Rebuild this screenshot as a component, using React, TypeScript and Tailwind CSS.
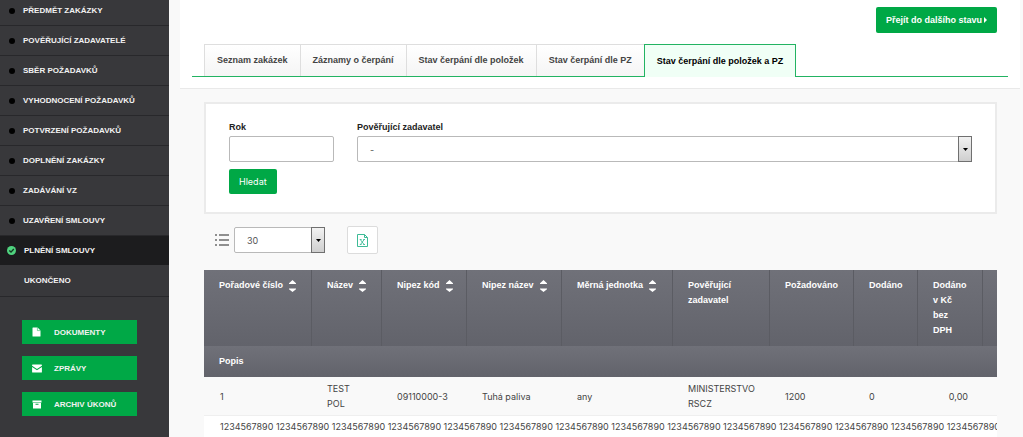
import React from "react";

const steps = [
  "Předmět zakázky",
  "Pověřující zadavatelé",
  "Sběr požadavků",
  "Vyhodnocení požadavků",
  "Potvrzení požadavků",
  "Doplnění zakázky",
  "Zadávání VZ",
  "Uzavření smlouvy",
];

const tabs = [
  "Seznam zakázek",
  "Záznamy o čerpání",
  "Stav čerpání dle položek",
  "Stav čerpání dle PZ",
];

const columns = [
  { label: "Pořadové číslo", sortable: true, width: "w-[108px]" },
  { label: "Název", sortable: true, width: "w-[70px]" },
  { label: "Nipez kód", sortable: true, width: "w-[85px]" },
  { label: "Nipez název", sortable: true, width: "w-[95px]" },
  { label: "Měrná jednotka", sortable: true, width: "w-[111px]" },
  { label: "Pověřující zadavatel", sortable: false, width: "w-[97px]" },
  { label: "Požadováno", sortable: false, width: "w-[84px]" },
  { label: "Dodáno", sortable: false, width: "w-[64px]" },
  { label: "Dodáno v Kč bez DPH", sortable: false, width: "w-[65px]" },
  { label: "", sortable: false, width: "w-[65px]" },
];

const description = Array(18).fill("1234567890").join(" ");

function SortIcon() {
  return (
    <svg width="7" height="12" viewBox="0 0 7 12" className="shrink-0" aria-hidden="true">
      <path d="M3.5 0 7 3.2V4H0V3.2Z M0 8.4H7V9.2L3.5 12 0 9.2Z" fill="#fff" />
    </svg>
  );
}

function DocumentIcon() {
  return (
    <svg width="9" height="10" viewBox="0 0 9 10" fill="#fff" aria-hidden="true">
      <path d="M1 .5H5.6L8.5 3.4V9a.5.5 0 0 1-.5.5H1A.5.5 0 0 1 .5 9V1A.5.5 0 0 1 1 .5Z" />
      <path d="M5.4.5V3.6H8.5" fill="none" stroke="#00a846" strokeWidth=".5" />
    </svg>
  );
}

function MailIcon() {
  return (
    <svg width="10" height="9" viewBox="0 0 10 9" fill="#fff" aria-hidden="true">
      <path d="M.6.5H9.4a.5.5 0 0 1 .5.5V1.8L5 5 .1 1.8V1A.5.5 0 0 1 .6.5Z M.1 3 5 6.2 9.9 3V8a.5.5 0 0 1-.5.5H.6A.5.5 0 0 1 .1 8Z" />
    </svg>
  );
}

function ArchiveIcon() {
  return (
    <svg width="10" height="9" viewBox="0 0 10 9" fill="#fff" aria-hidden="true">
      <path d="M.5.5H9.5V2.4H.5Z M1 3H9V8.5H1Z M3.5 3.8V4.7H6.5V3.8Z" fillRule="evenodd" />
    </svg>
  );
}

function SelectBox({
  id,
  label,
  value,
  className,
}: {
  id: string;
  label?: string;
  value: string;
  className?: string;
}) {
  return (
    <div className="relative">
      <select
        id={id}
        aria-label={label}
        className={`block h-[26px] appearance-none rounded-[2px] border border-[#b9b9b9] bg-white pl-3 pr-5 font-[Inter,sans-serif] text-[9px] text-[#555] ${className ?? ""}`}
      >
        <option>{value}</option>
      </select>
      <span className="pointer-events-none absolute inset-y-0 right-0 flex w-[14px] items-center justify-center border border-[#707070] bg-linear-to-b from-[#f2f2f2] to-[#cfcfcf]">
        <svg width="5" height="3" viewBox="0 0 5 3" aria-hidden="true">
          <path d="M0 0H5L2.5 3Z" fill="#000" />
        </svg>
      </span>
    </div>
  );
}

const sideButtons = [
  { label: "Dokumenty", icon: <DocumentIcon /> },
  { label: "Zprávy", icon: <MailIcon /> },
  { label: "Archiv úkonů", icon: <ArchiveIcon /> },
];

export default function App() {
  return (
    <div className="flex h-screen overflow-hidden bg-[#f9f9f9] font-['Liberation_Sans',Arial,sans-serif] text-[9px] leading-[15px] text-[#444]">
      <aside className="w-[169px] shrink-0 bg-[#38383b] text-[8px] font-bold uppercase text-[#f2f2f2]">
        <nav>
          <ul className="-mt-1">
            {steps.map((s) => (
              <li key={s} className="h-[30px] border-b border-[#28282b]">
                <a href="#" className="flex h-full items-center gap-2 pl-[9px]">
                  <span className="size-[6px] rounded-full bg-black" />
                  {s}
                </a>
              </li>
            ))}
            <li className="h-[29px] bg-[#1c1c1e]">
              <a href="#" aria-current="step" className="flex h-full items-center gap-2 pl-[7px]">
                <svg width="9" height="9" viewBox="0 0 9 9" aria-hidden="true">
                  <circle cx="4.5" cy="4.5" r="4.5" fill="#4fd37f" />
                  <path d="M2.3 4.5 4 6.1 6.8 3" fill="none" stroke="#143a22" strokeWidth="1.4" />
                </svg>
                Plnění smlouvy
              </a>
            </li>
            <li className="h-8 border-b border-[#28282b]">
              <a href="#" className="flex h-full items-center pl-6">Ukončeno</a>
            </li>
          </ul>
        </nav>
        <div className="mt-[23px] flex flex-col gap-3 pl-[22px] pr-8">
          {sideButtons.map((b) => (
            <button key={b.label} type="button" className="flex h-6 items-center bg-[#00a846] pl-[10px] uppercase">
              <span className="flex w-[22px]">{b.icon}</span>
              {b.label}
            </button>
          ))}
        </div>
      </aside>

      <main className="min-w-0 flex-1 pl-[11px] pr-[3px]">
        <header className="border-b border-[#e9e9e9] bg-white pb-[11px] pl-3 pr-3 pt-[7px]">
          <div className="flex justify-end pr-[11px]">
            <button type="button" className="flex h-[26px] items-center gap-[2px] rounded-[2px] bg-[#00a846] px-[10px] font-bold text-white">
              Přejít do dalšího stavu
              <svg width="3" height="6" viewBox="0 0 3 6" aria-hidden="true">
                <path d="M0 0 3 3 0 6Z" fill="#fff" />
              </svg>
            </button>
          </div>
          <nav className="mt-[11px] flex border-b border-[#22b362] pl-3 font-bold">
            {tabs.map((t) => (
              <a
                key={t}
                href="#"
                className="flex h-8 items-center border-l border-t border-[#dedede] bg-linear-to-b from-white to-[#f5f5f5] px-3"
              >
                {t}
              </a>
            ))}
            <a
              href="#"
              aria-current="page"
              className="-mb-px flex h-[33px] items-center border border-b-0 border-[#22b362] bg-[#f0fff6] px-3 text-black"
            >
              Stav čerpání dle položek a PZ
            </a>
          </nav>
        </header>

        <section className="pl-6 pr-[23px]">
          <form className="mt-[13px] border-2 border-[#ebebeb] bg-white px-[23px] pb-[18px] pt-4">
            <div className="flex gap-[23px]">
              <div>
                <label htmlFor="rok" className="mb-px block font-bold text-[#222]">Rok</label>
                <input id="rok" type="text" className="block h-[26px] w-[105px] rounded-[2px] border border-[#b9b9b9] bg-white px-2" />
              </div>
              <div className="flex-1">
                <label htmlFor="zadavatel" className="mb-px block font-bold text-[#222]">Pověřující zadavatel</label>
                <SelectBox id="zadavatel" value="-" className="w-full" />
              </div>
            </div>
            <button type="button" className="mt-[7px] block h-[25px] rounded-[2px] bg-[#00a846] px-[10px] font-[Inter,sans-serif] text-white">
              Hledat
            </button>
          </form>

          <div className="mt-3 flex items-center pl-[11px]">
            <svg width="14" height="12" viewBox="0 0 14 12" fill="#8f8f8f" className="mr-[5px]" aria-hidden="true">
              <path d="M0 0h2v2H0z M4 0h10v2H4z M0 5h2v2H0z M4 5h10v2H4z M0 10h2v2H0z M4 10h10v2H4z" />
            </svg>
            <SelectBox id="pocet" label="Počet záznamů" value="30" className="w-[91px]" />
            <button type="button" aria-label="Export" className="ml-[22px] flex h-7 w-[31px] items-center justify-center rounded-[2px] border border-[#dcdcdc] bg-white">
              <svg width="11" height="13" viewBox="0 0 11 13" fill="none" stroke="#3dbb96" aria-hidden="true">
                <path d="M.5.5H7.5L10.5 3.5V12.5H.5Z M7.5.5V3.5H10.5" />
                <path d="M3.3 5.5 7 10.5 M7.2 5.5 3.5 10.5 M2.8 5.5H4.6 M6.2 5.5H8 M2.8 10.5H4.6 M6.2 10.5H8" strokeWidth=".9" />
              </svg>
            </button>
          </div>

          <div className="mt-4 overflow-hidden">
            <table className="w-[844px] table-fixed border-collapse text-left font-[Inter,sans-serif]">
              <thead className="font-['Liberation_Sans',Arial,sans-serif] text-white">
                <tr>
                  {columns.map((c, i) => (
                    <th
                      key={i}
                      scope="col"
                      className={`${c.width} bg-linear-to-b from-[#707179] to-[#62636b] px-[15px] py-2 align-top shadow-[inset_-1px_0_0_#5b5c63]`}
                    >
                      <span className="flex items-center gap-[6px]">
                        <span className={c.sortable ? "whitespace-nowrap" : ""}>{c.label}</span>
                        {c.sortable && <SortIcon />}
                      </span>
                    </th>
                  ))}
                </tr>
                <tr>
                  <th colSpan={10} scope="colgroup" className="bg-linear-to-b from-[#707179] to-[#62636b] px-[15px] py-2">
                    Popis
                  </th>
                </tr>
              </thead>
              <tbody>
                <tr className="border-b border-[#efefef] bg-[#f9f9f9]">
                  <td className="px-4 py-1">1</td>
                  <td className="px-[15px] py-1">TEST POL</td>
                  <td className="whitespace-nowrap px-[15px] py-1">09110000-3</td>
                  <td className="px-[15px] py-1">Tuhá paliva</td>
                  <td className="px-[15px] py-1">any</td>
                  <td className="px-[15px] py-1">MINISTERSTVO RSCZ</td>
                  <td className="px-[15px] py-1">1200</td>
                  <td className="px-[15px] py-1">0</td>
                  <td className="px-[15px] py-1 text-right">0,00</td>
                  <td />
                </tr>
                <tr className="bg-white">
                  <td colSpan={10} className="overflow-hidden whitespace-nowrap py-[3px] pl-4">{description}</td>
                </tr>
              </tbody>
            </table>
          </div>
        </section>
      </main>
    </div>
  );
}
